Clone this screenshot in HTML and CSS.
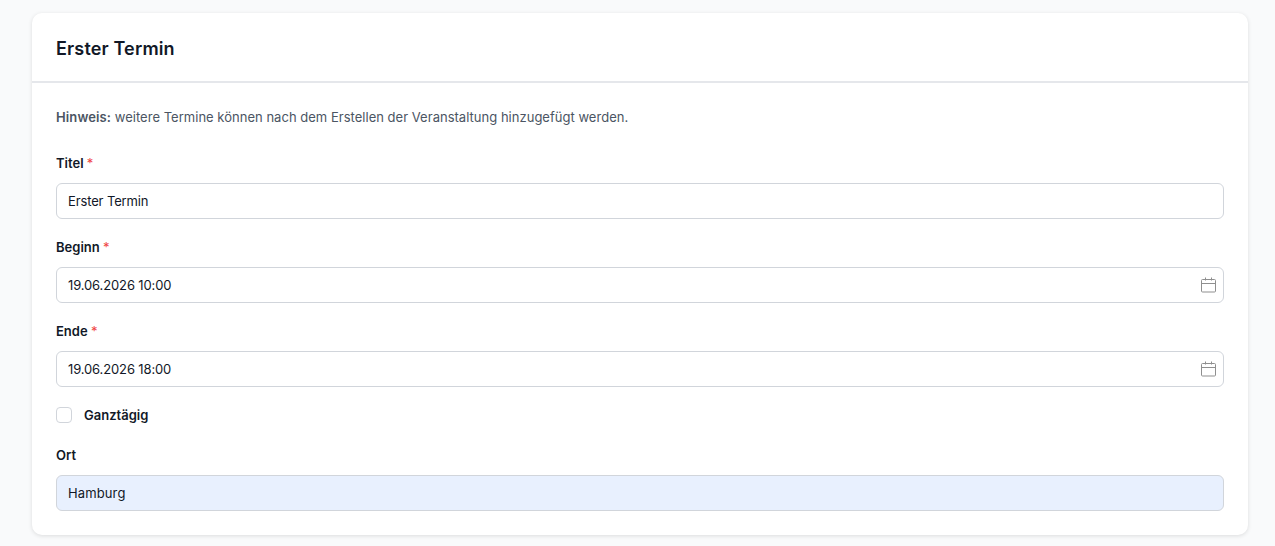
FILE: index.html
```html
<!DOCTYPE html>
<html lang="de">
<head>
  <meta charset="UTF-8" />
  <title>Erster Termin</title>
  <link rel="stylesheet" href="styles.css">
</head>
<body>
  <section class="card">
    <h2 class="card-title">Erster Termin</h2>
    <div class="card-body">
      <p class="hint"><strong>Hinweis:</strong> weitere Termine können nach dem Erstellen der Veranstaltung hinzugefügt werden.</p>

      <div class="field">
        <label class="label">Titel <span class="req">*</span></label>
        <div class="input">Erster Termin</div>
      </div>

      <div class="field">
        <label class="label">Beginn <span class="req">*</span></label>
        <div class="input">
          19.06.2026 10:00
          <svg class="cal" viewBox="0 0 16 16" fill="none" stroke="currentColor" stroke-width="1"><rect x="1.5" y="2.5" width="14" height="12.5" rx="1"/><path d="M1.5 6.5h14M5.5 .5v3M11.5 .5v3"/></svg>
        </div>
      </div>

      <div class="field">
        <label class="label">Ende <span class="req">*</span></label>
        <div class="input">
          19.06.2026 18:00
          <svg class="cal" viewBox="0 0 16 16" fill="none" stroke="currentColor" stroke-width="1"><rect x="1.5" y="2.5" width="14" height="12.5" rx="1"/><path d="M1.5 6.5h14M5.5 .5v3M11.5 .5v3"/></svg>
        </div>
      </div>

      <div class="check-row">
        <span class="checkbox"></span>
        <span class="check-label">Ganztägig</span>
      </div>

      <div class="field">
        <label class="label">Ort</label>
        <div class="input autofill">Hamburg</div>
      </div>
    </div>
  </section>
</body>
</html>
```

FILE: styles.css
```css
* {
  box-sizing: border-box;
}

html, body {
  height: 100%;
  overflow: hidden;
}

body {
  margin: 0;
  padding: 13px 27px 0 32px;
  background: #f9fafb;
  font-family: "Inter", "Noto Sans", sans-serif;
  font-size: 13px;
  color: #111827;
}

.card {
  background: #fff;
  border-radius: 10px;
  height: 522px;
  box-shadow: 0 1px 4px rgba(0,0,0,0.12);
}

.card-title {
  margin: 0;
  height: 70px;
  padding: 2px 24px 0;
  display: flex;
  align-items: center;
  font-size: 18px;
  font-weight: 600;
  letter-spacing: 0.15px;
  border-bottom: 2px solid #e5e7eb;
}

.card-body {
  padding: 24px 24px 0;
}

.hint {
  margin: 0 0 26px;
  line-height: 20px;
  letter-spacing: 0.02px;
  color: #4b5563;
}

.hint strong {
  font-weight: 600;
  letter-spacing: 0.12px;
}

.field {
  margin-bottom: 18px;
}

.label {
  display: block;
  font-weight: 600;
  line-height: 20px;
  margin-bottom: 10px;
}

.req {
  color: #ef4444;
  font-weight: 400;
}

.input {
  height: 36px;
  padding: 0 11px;
  display: flex;
  align-items: center;
  justify-content: space-between;
  background: #fff;
  border: 1px solid #d1d5db;
  border-radius: 6px;
  letter-spacing: -0.13px;
}

.autofill {
  background: #e8f0fe;
  letter-spacing: 0.12px;
}

.cal {
  width: 16px;
  height: 16px;
  margin-right: -4px;
  color: #8f8f8f;
}

.check-row {
  display: flex;
  align-items: center;
  gap: 12px;
  height: 16px;
  margin: 20px 0 22px;
}

.checkbox {
  width: 16px;
  height: 16px;
  border: 1px solid #d1d5db;
  border-radius: 4px;
  background: #fff;
}

.check-label {
  font-weight: 600;
}
```
